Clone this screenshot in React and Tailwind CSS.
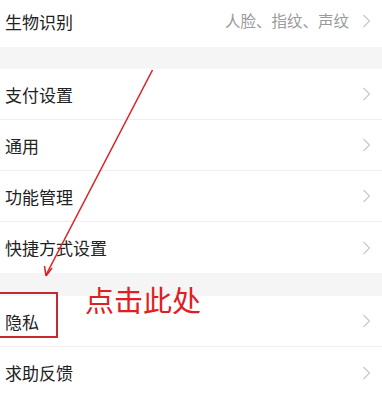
import React from "react";

const Chevron = () => (
  <svg width="9" height="14" viewBox="0 0 9 14" className="shrink-0">
    <path d="M1.5 1 L7.5 7 L1.5 13" fill="none" stroke="#c9c9c9" strokeWidth="1.2" />
  </svg>
);

const Row = ({ label, value, last, className = "" }) => (
  <div
    className={`flex items-center justify-between pl-[5px] pr-[11px] h-[51px] bg-white ${
      last ? "" : "border-b border-[#efefef]"
    } ${className}`}
  >
    <span className="text-[17px] text-[#222222] leading-none">{label}</span>
    <div className="flex items-center gap-[13px]">
      {value && <span className="text-[15.5px] text-[#9a9a9a] leading-none">{value}</span>}
      <Chevron />
    </div>
  </div>
);

export default function App() {
  return (
    <div
      className="relative w-[382px] h-[397px] overflow-hidden bg-[#f5f5f5]"
      style={{ fontFamily: '"Noto Sans CJK SC", "Noto Sans", sans-serif' }}
    >
      <div className="flex items-center justify-between pl-[5px] pr-[11px] h-[47px] pb-[5px] bg-white">
        <span className="text-[17px] text-[#222222] leading-none">生物识别</span>
        <div className="flex items-center gap-[13px]">
          <span className="text-[15.5px] text-[#9a9a9a] leading-none">人脸、指纹、声纹</span>
          <Chevron />
        </div>
      </div>
      <div className="h-[22px]" />
      <Row label="支付设置" />
      <Row label="通用" />
      <Row label="功能管理" />
      <Row label="快捷方式设置" last />
      <div className="h-[23px]" />
      <Row label="隐私" />
      <Row label="求助反馈" last />

      {/* annotation overlays */}
      <svg className="absolute left-0 top-0 pointer-events-none" width="382" height="397">
        <line x1="152.5" y1="70" x2="46" y2="275" stroke="#d6262a" strokeWidth="1.6" />
        <path d="M46 276 L44.5 266 M46 276 L52 268" stroke="#d6262a" strokeWidth="1.6" fill="none" />
      </svg>
      <div className="absolute left-[-2px] top-[292px] w-[60px] h-[46px] border-2 border-[#c5282d]" />
      <div className="absolute left-[85px] top-[285px] text-[29px] leading-none text-[#e0201f]">
        点击此处
      </div>
    </div>
  );
}
